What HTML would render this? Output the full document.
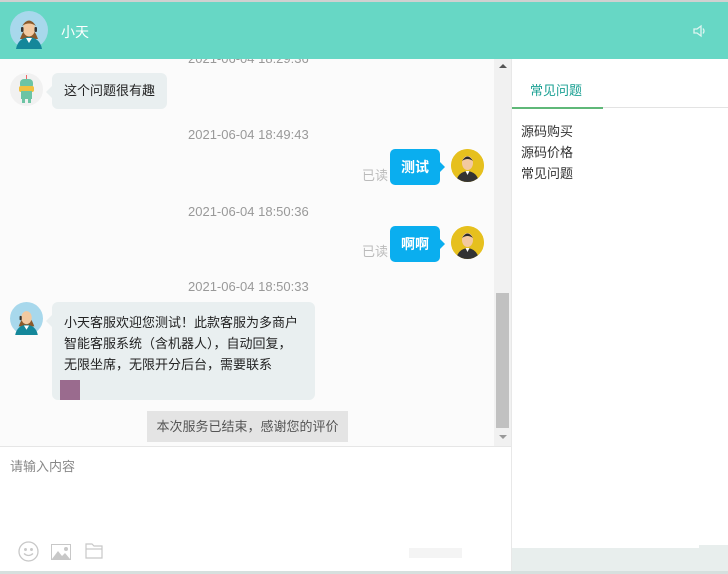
<!DOCTYPE html>
<html><head><meta charset="utf-8"><style>
*{margin:0;padding:0;box-sizing:border-box}
body{width:728px;height:574px;overflow:hidden;background:#fff;font-family:"Liberation Sans","Noto Sans CJK SC",sans-serif;font-size:13px;color:#333;position:relative}
.abs{position:absolute}
.ts{position:absolute;left:188px;color:#999;font-size:13px;line-height:16px}
.bub{position:absolute;background:#e9eff0;border-radius:6px;color:#222;font-size:13px}
.bub:before{content:"";position:absolute;left:-6px;top:13px;border:6px solid transparent;border-left:0;border-right-color:#e9eff0}
.blue{position:absolute;left:390px;width:50px;height:36px;background:#0aaeef;border-radius:5px;color:#fff;text-align:center;line-height:36px;font-size:14px;font-weight:bold}
.blue:after{content:"";position:absolute;right:-5px;top:13px;border:5px solid transparent;border-right:0;border-left-color:#0aaeef}
.read{position:absolute;left:362px;color:#bbb;font-size:13px}
.man{position:absolute;left:451px;width:33px;height:33px;border-radius:50%;background:#e6c01e;overflow:hidden}
</style></head><body>
<div class="abs" style="left:0;top:0;width:728px;height:2px;background:#d0d0d0"></div>
<div class="abs" style="left:0;top:2px;width:728px;height:57px;background:#67d7c5"></div>
<svg class="abs" style="left:10px;top:11px" width="38" height="38" viewBox="0 0 38 38"><circle cx="19" cy="19" r="19" fill="#a8d8ec"/><path d="M10 28 Q19 4 28 28 Z" fill="#8a5a2b"/><ellipse cx="19" cy="18" rx="6" ry="7.5" fill="#f2c9a0"/><path d="M12 15 Q19 4 26 15 Q19 10 12 15Z" fill="#8a5a2b"/><path d="M6 38 Q8 27 19 26 Q30 27 32 38Z" fill="#14879a"/><path d="M16 27 L19 32 L22 27Z" fill="#fff"/><rect x="11" y="16" width="2.5" height="5" rx="1" fill="#333"/><rect x="24.5" y="16" width="2.5" height="5" rx="1" fill="#333"/></svg>
<div class="abs" style="left:61px;top:22px;color:#fff;font-size:14px">小天</div>
<svg class="abs" style="left:693px;top:24px" width="14" height="14" viewBox="0 0 14 14" fill="none" stroke="#dff5f1" stroke-width="1.3"><path d="M1 5h3l4-3v10l-4-3H1z"/><path d="M10 4.5q2 2.5 0 5"/></svg>

<div class="abs" style="left:0;top:59px;width:494px;height:387px;background:#fbfbfb;overflow:hidden">
<div class="ts" style="top:-8px">2021-06-04 18:29:36</div>
</div>
<div class="abs" style="left:494px;top:59px;width:17px;height:387px;background:#f1f1f1"></div>
<div class="abs" style="left:496px;top:293px;width:13px;height:135px;background:#c1c1c1"></div>
<div class="abs" style="left:499px;top:64px;border:4px solid transparent;border-top:0;border-bottom:4px solid #555"></div>
<div class="abs" style="left:499px;top:435px;border:4px solid transparent;border-bottom:0;border-top:4px solid #999"></div>

<svg class="abs" style="left:10px;top:73px" width="33" height="33" viewBox="0 0 33 33"><circle cx="16.5" cy="16.5" r="16.5" fill="#f1f1f1"/><rect x="16" y="2" width="1" height="4" fill="#e66"/><rect x="10" y="6" width="13" height="10" rx="4" fill="#6cc4a4"/><rect x="9" y="13" width="15" height="6" rx="2" fill="#f0c040"/><rect x="11" y="18" width="11" height="8" fill="#6cc4a4"/><rect x="12" y="26" width="3" height="4" fill="#6cc4a4"/><rect x="18" y="26" width="3" height="4" fill="#6cc4a4"/></svg>
<div class="bub" style="left:52px;top:73px;width:115px;height:36px;line-height:36px;padding-left:12px">这个问题很有趣</div>

<div class="ts" style="top:127px">2021-06-04 18:49:43</div>
<div class="read" style="top:165px">已读</div>
<div class="blue" style="top:149px">测试</div>
<svg class="man" style="top:149px" viewBox="0 0 33 33"><circle cx="16.5" cy="16.5" r="16.5" fill="#e6c01e"/><ellipse cx="16.5" cy="14" rx="5.5" ry="7" fill="#f3c9a0"/><path d="M11 12 Q16.5 3 22 12 Q16.5 8 11 12Z" fill="#2b2b2b"/><path d="M5 33 Q7 23 16.5 22 Q26 23 28 33Z" fill="#333"/><path d="M14.5 22 L16.5 26 L18.5 22Z" fill="#fff"/></svg>

<div class="ts" style="top:204px">2021-06-04 18:50:36</div>
<div class="read" style="top:241px">已读</div>
<div class="blue" style="top:226px">啊啊</div>
<svg class="man" style="top:226px" viewBox="0 0 33 33"><circle cx="16.5" cy="16.5" r="16.5" fill="#e6c01e"/><ellipse cx="16.5" cy="14" rx="5.5" ry="7" fill="#f3c9a0"/><path d="M11 12 Q16.5 3 22 12 Q16.5 8 11 12Z" fill="#2b2b2b"/><path d="M5 33 Q7 23 16.5 22 Q26 23 28 33Z" fill="#333"/><path d="M14.5 22 L16.5 26 L18.5 22Z" fill="#fff"/></svg>

<div class="ts" style="top:279px">2021-06-04 18:50:33</div>
<svg class="abs" style="left:10px;top:302px" width="33" height="33" viewBox="0 0 38 38"><circle cx="19" cy="19" r="19" fill="#a8d8ec"/><path d="M10 28 Q19 4 28 28 Z" fill="#8a5a2b"/><ellipse cx="19" cy="18" rx="6" ry="7.5" fill="#f2c9a0"/><path d="M6 38 Q8 27 19 26 Q30 27 32 38Z" fill="#14879a"/><path d="M16 27 L19 32 L22 27Z" fill="#fff"/><rect x="11" y="16" width="2.5" height="5" rx="1" fill="#333"/></svg>
<div class="bub" style="left:52px;top:302px;width:263px;height:98px;padding:9px 0 0 12px;line-height:21px;font-family:'Noto Sans CJK SC',sans-serif">小天客服欢迎您测试！此款客服为多商户<br>智能客服系统（含机器人），自动回复，<br>无限坐席，无限开分后台，需要联系</div>
<div class="abs" style="left:60px;top:380px;width:20px;height:20px;background:#9a6b8e"></div>

<div class="abs" style="left:147px;top:411px;width:201px;height:31px;background:#e4e4e4;color:#555;text-align:center;line-height:31px;font-size:13px">本次服务已结束，感谢您的评价</div>

<div class="abs" style="left:0;top:446px;width:511px;height:1px;background:#e6e6e6"></div>
<div class="abs" style="left:10px;top:456px;color:#888;font-size:13px">请输入内容</div>
<svg class="abs" style="left:18px;top:541px" width="21" height="21" viewBox="0 0 21 21" fill="none" stroke="#c8c8c8" stroke-width="1.3"><circle cx="10.5" cy="10.5" r="9.5"/><circle cx="7.5" cy="8.5" r=".8" fill="#c8c8c8"/><circle cx="13.5" cy="8.5" r=".8" fill="#c8c8c8"/><path d="M6 12.5q4.5 4 9 0"/></svg>
<svg class="abs" style="left:51px;top:544px" width="20" height="16" viewBox="0 0 20 16"><rect x=".5" y=".5" width="19" height="15" fill="none" stroke="#c8c8c8"/><path d="M1 15 L7 7 L11 12 L14 9 L19 15Z" fill="#c8c8c8"/><circle cx="15" cy="5" r="2" fill="#c8c8c8"/></svg>
<svg class="abs" style="left:85px;top:543px" width="18" height="16" viewBox="0 0 18 16" fill="none" stroke="#c8c8c8" stroke-width="1.2"><path d="M1 1h6l2 2h8v12H1z"/><path d="M1 6h16"/></svg>
<div class="abs" style="left:409px;top:548px;width:53px;height:10px;background:#f4f4f4"></div>

<div class="abs" style="left:511px;top:59px;width:1px;height:512px;background:#e8e8e8"></div>
<div class="abs" style="left:530px;top:80px;color:#1aa093;font-size:13px">常见问题</div>
<div class="abs" style="left:512px;top:107px;width:216px;height:1px;background:#e3e3e3"></div>
<div class="abs" style="left:512px;top:107px;width:91px;height:2px;background:#5fb878"></div>
<div class="abs" style="left:521px;top:121px;line-height:21px;color:#333">源码购买<br>源码价格<br>常见问题</div>
<div class="abs" style="left:512px;top:548px;width:216px;height:23px;background:#e8eeed"></div>
<div class="abs" style="left:699px;top:545px;width:29px;height:3px;background:#e8eeed"></div>
<div class="abs" style="left:0;top:571px;width:728px;height:3px;background:#d6e0de"></div>
</body></html>
